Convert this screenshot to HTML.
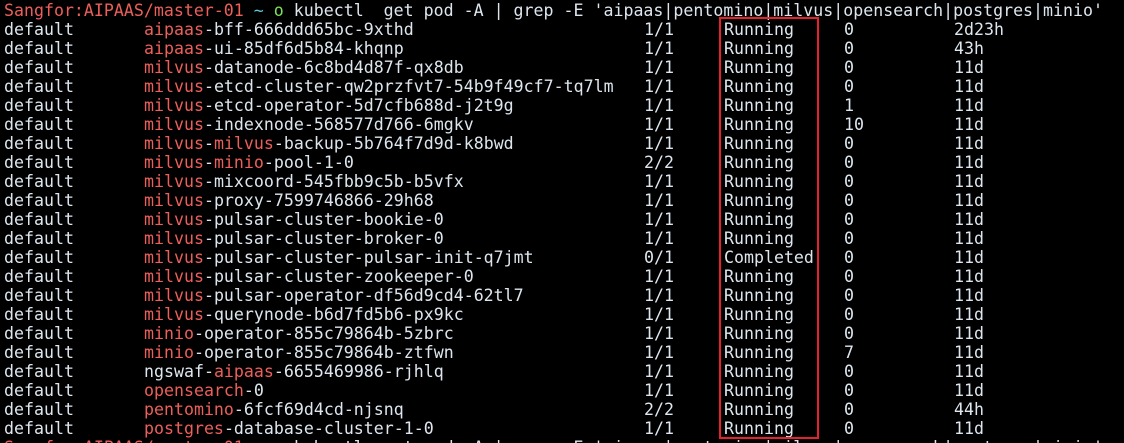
<!DOCTYPE html>
<html><head><meta charset="utf-8"><style>
html,body{margin:0;padding:0;background:#000;width:1124px;height:443px;overflow:hidden}
body{font-family:"DejaVu Sans Mono","Liberation Mono",monospace;font-size:16.6px;color:#dde6ee;position:relative}
.w{position:absolute;left:0;top:1px;width:1124px;height:443px}
.r{position:absolute;left:0;height:19px;line-height:19px;white-space:pre;width:1124px}
.r span{position:absolute;top:0}
.c0{left:4px}.c1{left:144px}.c2{left:644px}.c3{left:724px}.c4{left:844px}.c5{left:954px}
b{font-weight:normal;color:#ec5f5a}
i{font-style:normal;color:#5fc9d8}
u{text-decoration:none;color:#7ee05a}
.box{position:absolute;left:719px;top:17px;width:96px;height:418px;border:2px solid #e5212b}
</style></head><body>
<div class="w">
<div class="r" style="top:0px"><span class="c0"><b>Sangfor:AIPAAS/master-01</b> <i>~</i> <u>o</u> kubectl  get pod -A | grep -E 'aipaas|pentomino|milvus|opensearch|postgres|minio'</span></div>
<div class="r" style="top:19px"><span class="c0">default</span><span class="c1"><b>aipaas</b>-bff-666ddd65bc-9xthd</span><span class="c2">1/1</span><span class="c3">Running</span><span class="c4">0</span><span class="c5">2d23h</span></div>
<div class="r" style="top:38px"><span class="c0">default</span><span class="c1"><b>aipaas</b>-ui-85df6d5b84-khqnp</span><span class="c2">1/1</span><span class="c3">Running</span><span class="c4">0</span><span class="c5">43h</span></div>
<div class="r" style="top:57px"><span class="c0">default</span><span class="c1"><b>milvus</b>-datanode-6c8bd4d87f-qx8db</span><span class="c2">1/1</span><span class="c3">Running</span><span class="c4">0</span><span class="c5">11d</span></div>
<div class="r" style="top:76px"><span class="c0">default</span><span class="c1"><b>milvus</b>-etcd-cluster-qw2przfvt7-54b9f49cf7-tq7lm</span><span class="c2">1/1</span><span class="c3">Running</span><span class="c4">0</span><span class="c5">11d</span></div>
<div class="r" style="top:95px"><span class="c0">default</span><span class="c1"><b>milvus</b>-etcd-operator-5d7cfb688d-j2t9g</span><span class="c2">1/1</span><span class="c3">Running</span><span class="c4">1</span><span class="c5">11d</span></div>
<div class="r" style="top:114px"><span class="c0">default</span><span class="c1"><b>milvus</b>-indexnode-568577d766-6mgkv</span><span class="c2">1/1</span><span class="c3">Running</span><span class="c4">10</span><span class="c5">11d</span></div>
<div class="r" style="top:133px"><span class="c0">default</span><span class="c1"><b>milvus</b>-<b>milvus</b>-backup-5b764f7d9d-k8bwd</span><span class="c2">1/1</span><span class="c3">Running</span><span class="c4">0</span><span class="c5">11d</span></div>
<div class="r" style="top:152px"><span class="c0">default</span><span class="c1"><b>milvus</b>-<b>minio</b>-pool-1-0</span><span class="c2">2/2</span><span class="c3">Running</span><span class="c4">0</span><span class="c5">11d</span></div>
<div class="r" style="top:171px"><span class="c0">default</span><span class="c1"><b>milvus</b>-mixcoord-545fbb9c5b-b5vfx</span><span class="c2">1/1</span><span class="c3">Running</span><span class="c4">0</span><span class="c5">11d</span></div>
<div class="r" style="top:190px"><span class="c0">default</span><span class="c1"><b>milvus</b>-proxy-7599746866-29h68</span><span class="c2">1/1</span><span class="c3">Running</span><span class="c4">0</span><span class="c5">11d</span></div>
<div class="r" style="top:209px"><span class="c0">default</span><span class="c1"><b>milvus</b>-pulsar-cluster-bookie-0</span><span class="c2">1/1</span><span class="c3">Running</span><span class="c4">0</span><span class="c5">11d</span></div>
<div class="r" style="top:228px"><span class="c0">default</span><span class="c1"><b>milvus</b>-pulsar-cluster-broker-0</span><span class="c2">1/1</span><span class="c3">Running</span><span class="c4">0</span><span class="c5">11d</span></div>
<div class="r" style="top:247px"><span class="c0">default</span><span class="c1"><b>milvus</b>-pulsar-cluster-pulsar-init-q7jmt</span><span class="c2">0/1</span><span class="c3">Completed</span><span class="c4">0</span><span class="c5">11d</span></div>
<div class="r" style="top:266px"><span class="c0">default</span><span class="c1"><b>milvus</b>-pulsar-cluster-zookeeper-0</span><span class="c2">1/1</span><span class="c3">Running</span><span class="c4">0</span><span class="c5">11d</span></div>
<div class="r" style="top:285px"><span class="c0">default</span><span class="c1"><b>milvus</b>-pulsar-operator-df56d9cd4-62tl7</span><span class="c2">1/1</span><span class="c3">Running</span><span class="c4">0</span><span class="c5">11d</span></div>
<div class="r" style="top:304px"><span class="c0">default</span><span class="c1"><b>milvus</b>-querynode-b6d7fd5b6-px9kc</span><span class="c2">1/1</span><span class="c3">Running</span><span class="c4">0</span><span class="c5">11d</span></div>
<div class="r" style="top:323px"><span class="c0">default</span><span class="c1"><b>minio</b>-operator-855c79864b-5zbrc</span><span class="c2">1/1</span><span class="c3">Running</span><span class="c4">0</span><span class="c5">11d</span></div>
<div class="r" style="top:342px"><span class="c0">default</span><span class="c1"><b>minio</b>-operator-855c79864b-ztfwn</span><span class="c2">1/1</span><span class="c3">Running</span><span class="c4">7</span><span class="c5">11d</span></div>
<div class="r" style="top:361px"><span class="c0">default</span><span class="c1">ngswaf-<b>aipaas</b>-6655469986-rjhlq</span><span class="c2">1/1</span><span class="c3">Running</span><span class="c4">0</span><span class="c5">11d</span></div>
<div class="r" style="top:380px"><span class="c0">default</span><span class="c1"><b>opensearch</b>-0</span><span class="c2">1/1</span><span class="c3">Running</span><span class="c4">0</span><span class="c5">11d</span></div>
<div class="r" style="top:399px"><span class="c0">default</span><span class="c1"><b>pentomino</b>-6fcf69d4cd-njsnq</span><span class="c2">2/2</span><span class="c3">Running</span><span class="c4">0</span><span class="c5">44h</span></div>
<div class="r" style="top:418px"><span class="c0">default</span><span class="c1"><b>postgres</b>-database-cluster-1-0</span><span class="c2">1/1</span><span class="c3">Running</span><span class="c4">0</span><span class="c5">11d</span></div>
<div class="r" style="top:437px"><span class="c0"><b>Sangfor:AIPAAS/master-01</b> <i>~</i> <u>o</u> kubectl  get pod -A | grep -E 'aipaas|pentomino|milvus|opensearch|postgres|minio'</span></div>
</div>
<div class="box"></div>
</body></html>
